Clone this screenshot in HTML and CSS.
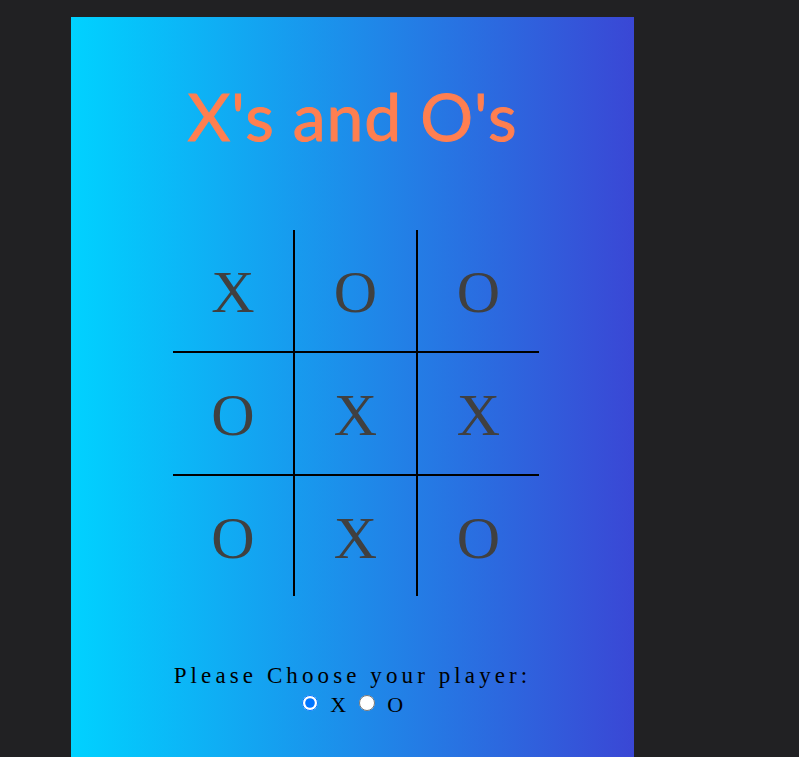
FILE: index.html
```html
<!DOCTYPE html>
<html>
<head>
<meta charset="utf-8">
<title>X's and O's</title>
<link rel="stylesheet" href="styles.css">
</head>
<body>
<main class="panel">
  <h1 class="title">X's and O's</h1>
  <div class="board">
    <div class="cell c-r c-b">X</div>
    <div class="cell c-r c-b">O</div>
    <div class="cell c-b">O</div>
    <div class="cell c-r c-b">O</div>
    <div class="cell c-r c-b">X</div>
    <div class="cell c-b">X</div>
    <div class="cell c-r">O</div>
    <div class="cell c-r">X</div>
    <div class="cell">O</div>
  </div>
  <div class="chooser">
    <p class="prompt">Please Choose your player:</p>
    <div class="options">
      <label class="opt"><input type="radio" name="player" value="X" checked> X</label>
      <label class="opt"><input type="radio" name="player" value="O"> O</label>
    </div>
  </div>
</main>
</body>
</html>
```

FILE: styles.css
```css
html, body {
  margin: 0;
  padding: 0;
  background: #212123;
  height: 100%;
  overflow: hidden;
}
.panel {
  margin: 17px 0 0 71px;
  width: 563px;
  height: 760px;
  background: linear-gradient(to right, #00d2ff, #3a47d5);
  display: flex;
  flex-direction: column;
  align-items: center;
}
.title {
  margin: 59px 0 0 0;
  font-family: Lato, "Open Sans", sans-serif;
  font-weight: 400;
  font-size: 66px;
  line-height: 80px;
  color: #ff7f50;
  letter-spacing: 1px;
  -webkit-text-stroke: 1px #ff7f50;
}
.board {
  margin: 74px 0 0 7px;
  display: grid;
  grid-template-columns: 122px 123px 121px;
  grid-template-rows: 123px 123px 120px;
}
.cell {
  display: flex;
  align-items: center;
  justify-content: center;
  padding-top: 4px;
  font-family: "Liberation Serif", "Times New Roman", serif;
  font-size: 60px;
  color: #404040;
}
.c-r { border-right: 2px solid #000; }
.c-b { border-bottom: 2px solid #000; }
.chooser {
  margin-top: 65px;
  text-align: center;
  font-family: "Liberation Serif", "Times New Roman", serif;
  color: #000;
}
.prompt {
  margin: 0;
  font-size: 23px;
  letter-spacing: 4.1px;
  line-height: 30px;
}
.options {
  font-size: 22px;
  line-height: 28px;
}
.opt input {
  margin: 0 7px 0 7px;
  width: 16px;
  height: 16px;
  vertical-align: 1px;
}
.opt:first-child input {
  margin-left: 0;
}
```
